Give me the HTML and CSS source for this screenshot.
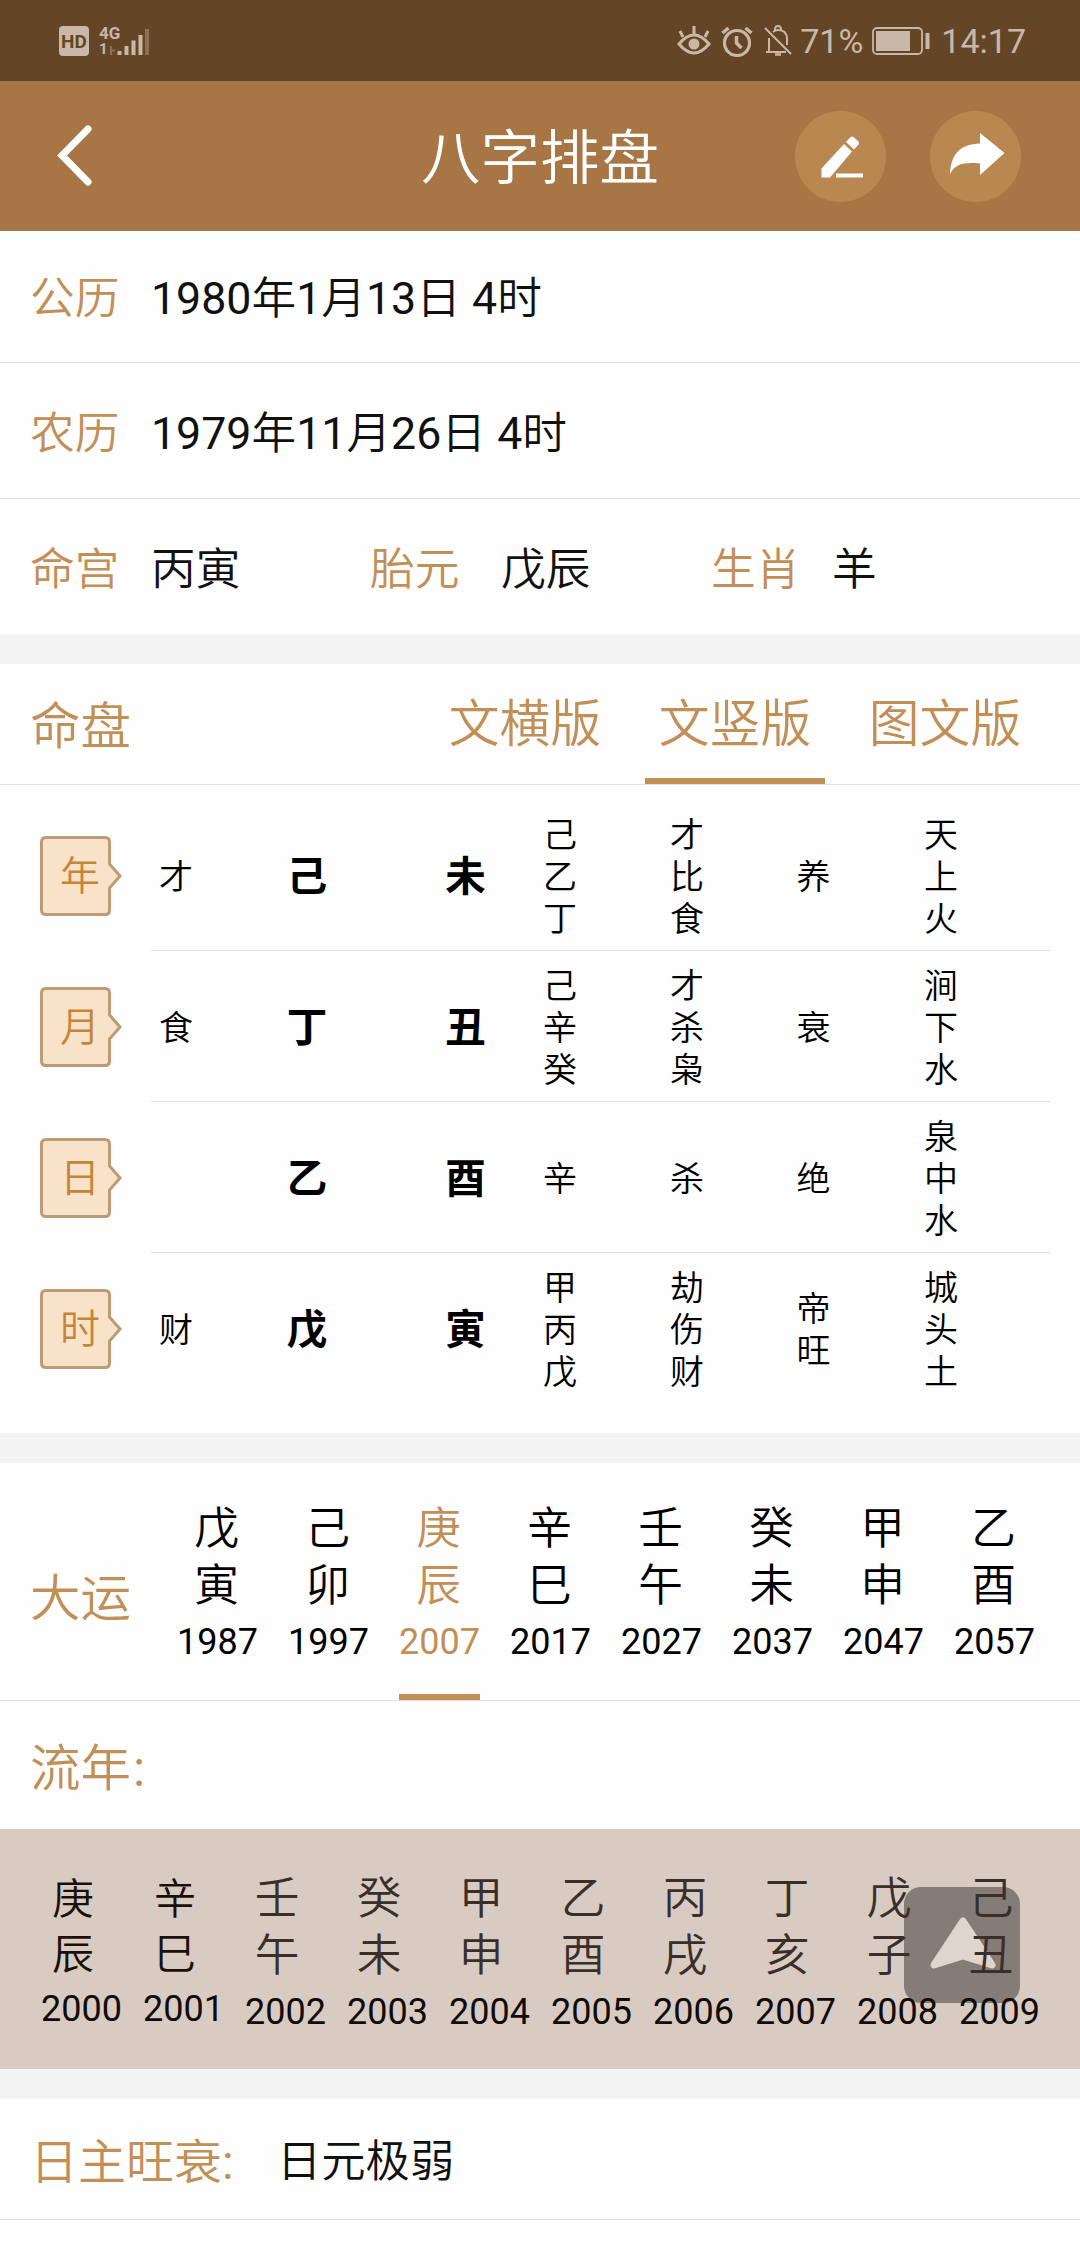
FILE: index.html
```
<!DOCTYPE html>
<html lang="zh-CN">
<head>
    <meta charset="UTF-8">
    <meta name="viewport" content="width=device-width, initial-scale=1.0">
    <title>八字排盘</title>
    <link rel="stylesheet" href="styles.css">
</head>
<body>

<!-- 状态栏 -->
<div class="status-bar">
    <div class="status-left">
        <span class="hd">HD</span>
        <div class="net"><span>4G</span><span class="sim">1</span></div>
        <svg class="signal" width="40" height="34" viewBox="0 0 40 34">
            <path d="M2 22v9M2 26.500h4" class="dim" stroke-width="2"/>
            <path d="M10.500 27v4M17.500 22v9M24.500 16.500v14.500M31.500 11v20" stroke-width="4"/>
            <path d="M38 5v26" class="dim" stroke-width="4"/>
        </svg>
    </div>
    <div class="status-right">
        <svg class="eye" width="34" height="32" viewBox="0 0 34 32">
            <path d="M2 19Q17 1 32 19Q17 37 2 19Z" stroke-width="3"/>
            <path d="M17 1v8M3 6l3 6M31 6l-3 6" stroke-width="3"/>
            <circle cx="17" cy="19" r="5.500" class="solid"/>
        </svg>
        <svg class="alarm" width="32" height="32" viewBox="0 0 32 32">
            <circle cx="16" cy="18" r="12.500" stroke-width="3.200"/>
            <path d="M15.500 11v7l5 5" stroke-width="3.500"/>
            <path d="M1.500 8l6-5M30.500 8l-6-5" stroke-width="3.500"/>
        </svg>
        <svg class="bell" width="28" height="32" viewBox="0 0 28 32">
            <path d="M2 27h20M5 27V13M9 7Q11 5 14 5Q23 5 23 14V20" stroke-width="2"/>
            <path d="M11 5Q11 1 14 1Q17 1 17 5M1 3l26 26" stroke-width="2"/>
            <path d="M11 29.500h6" stroke-width="2.500"/>
        </svg>
        <span class="percent">71%</span>
        <svg class="battery" width="60" height="28" viewBox="0 0 60 28">
            <rect x="1" y="1" width="49" height="26" rx="4" stroke-width="1.800"/>
            <rect x="4" y="4" width="34" height="20" class="solid"/>
            <rect x="53.500" y="6" width="4" height="16" class="solid"/>
        </svg>
        <span class="time">14:17</span>
    </div>
</div>

<!-- 标题栏 -->
<div class="header">
    <svg class="back" width="40" height="64" viewBox="0 0 40 64">
        <path d="M34 5L8 31.500L34 58"/>
    </svg>
    <h1>八字排盘</h1>
    <div class="actions">
        <div class="action">
            <svg width="91" height="91" viewBox="0 0 91 91">
                <path d="M26.500 57.500L49 33l8 7.500L35 66.500h-8.500z"/>
                <path d="M51 31l4.500-5q1.500-1 3 0l5 4.500q1 1.500 0 3L59 38.500z"/>
                <rect x="41" y="62.500" width="27" height="4"/>
            </svg>
        </div>
        <div class="action">
            <svg width="91" height="91" viewBox="0 0 91 91">
                <path d="M20 63C21 43 30 33 50 32.500V22L74.500 42L50 64V52.500C34 51 25 53 20 63Z"/>
            </svg>
        </div>
    </div>
</div>

<!-- 基本信息 -->
<div class="info-row info-first">
    <span class="label">公历</span><span>1980<b>年</b>1<b>月</b>13<b>日</b> 4<b>时</b></span>
</div>
<div class="info-row">
    <span class="label">农历</span><span>1979<b>年</b>11<b>月</b>26<b>日</b> 4<b>时</b></span>
</div>
<div class="info-row info-last">
    <div class="info-item"><span class="label">命宫</span><b>丙寅</b></div>
    <div class="info-item taiyuan"><span class="label">胎元</span><b>戊辰</b></div>
    <div class="info-item"><span class="label">生肖</span><b>羊</b></div>
</div>
<div class="divider"></div>

<!-- 命盘 -->
<div class="tabs">
    <div class="section-title">命盘</div>
    <div class="tab">文横版</div>
    <div class="tab active">文竖版</div>
    <div class="tab">图文版</div>
</div>
<div class="chart">
    <div class="chart-row">
        <div class="badge">
            <svg width="84" height="80" viewBox="0 0 84 80"><path d="M7 1.500H66Q70.500 1.500 70.500 6V28L81 40L70.500 52V74Q70.500 78.500 66 78.500H7Q2.500 78.500 2.500 74V6Q2.500 1.500 7 1.500Z"/></svg>
            <span>年</span>
        </div>
        <div class="cells">
            <div>才</div><div class="stem">己</div><div class="branch">未</div>
            <div>己<br>乙<br>丁</div><div>才<br>比<br>食</div><div>养</div><div>天<br>上<br>火</div>
        </div>
    </div>
    <div class="chart-row">
        <div class="badge">
            <svg width="84" height="80" viewBox="0 0 84 80"><path d="M7 1.500H66Q70.500 1.500 70.500 6V28L81 40L70.500 52V74Q70.500 78.500 66 78.500H7Q2.500 78.500 2.500 74V6Q2.500 1.500 7 1.500Z"/></svg>
            <span>月</span>
        </div>
        <div class="cells">
            <div>食</div><div class="stem">丁</div><div class="branch">丑</div>
            <div>己<br>辛<br>癸</div><div>才<br>杀<br>枭</div><div>衰</div><div>涧<br>下<br>水</div>
        </div>
    </div>
    <div class="chart-row">
        <div class="badge">
            <svg width="84" height="80" viewBox="0 0 84 80"><path d="M7 1.500H66Q70.500 1.500 70.500 6V28L81 40L70.500 52V74Q70.500 78.500 66 78.500H7Q2.500 78.500 2.500 74V6Q2.500 1.500 7 1.500Z"/></svg>
            <span>日</span>
        </div>
        <div class="cells">
            <div></div><div class="stem">乙</div><div class="branch">酉</div>
            <div>辛</div><div>杀</div><div>绝</div><div>泉<br>中<br>水</div>
        </div>
    </div>
    <div class="chart-row">
        <div class="badge">
            <svg width="84" height="80" viewBox="0 0 84 80"><path d="M7 1.500H66Q70.500 1.500 70.500 6V28L81 40L70.500 52V74Q70.500 78.500 66 78.500H7Q2.500 78.500 2.500 74V6Q2.500 1.500 7 1.500Z"/></svg>
            <span>时</span>
        </div>
        <div class="cells">
            <div>财</div><div class="stem">戊</div><div class="branch">寅</div>
            <div>甲<br>丙<br>戊</div><div>劫<br>伤<br>财</div><div>帝<br>旺</div><div>城<br>头<br>土</div>
        </div>
    </div>
</div>
<div class="divider"></div>

<!-- 大运 -->
<div class="dayun">
    <div class="section-title">大运</div>
    <div class="luck"><b>戊</b><b>寅</b><i>1987</i></div>
    <div class="luck"><b>己</b><b>卯</b><i>1997</i></div>
    <div class="luck current"><b>庚</b><b>辰</b><i>2007</i></div>
    <div class="luck"><b>辛</b><b>巳</b><i>2017</i></div>
    <div class="luck"><b>壬</b><b>午</b><i>2027</i></div>
    <div class="luck"><b>癸</b><b>未</b><i>2037</i></div>
    <div class="luck"><b>甲</b><b>申</b><i>2047</i></div>
    <div class="luck"><b>乙</b><b>酉</b><i>2057</i></div>
</div>

<!-- 流年 -->
<div class="liunian-title section-title">流年<i>:</i></div>
<div class="liunian">
    <!-- 回到顶部 -->
    <div class="to-top">
        <svg width="116" height="116" viewBox="0 0 116 116">
            <path d="M59 34L88 78L59 69L30 78Z"/>
        </svg>
    </div>
    <div class="year passed"><b>庚</b><b>辰</b><i>2000</i></div>
    <div class="year passed"><b>辛</b><b>巳</b><i>2001</i></div>
    <div class="year"><b>壬</b><b>午</b><i>2002</i></div>
    <div class="year"><b>癸</b><b>未</b><i>2003</i></div>
    <div class="year"><b>甲</b><b>申</b><i>2004</i></div>
    <div class="year"><b>乙</b><b>酉</b><i>2005</i></div>
    <div class="year"><b>丙</b><b>戌</b><i>2006</i></div>
    <div class="year"><b>丁</b><b>亥</b><i>2007</i></div>
    <div class="year"><b>戊</b><b>子</b><i>2008</i></div>
    <div class="year"><b>己</b><b>丑</b><i>2009</i></div>
</div>
<div class="divider"></div>

<!-- 日主旺衰 -->
<div class="strength">
    <span class="strength-label">日主旺衰<i>:</i></span><span>日元极弱</span>
</div>

</body>
</html>
```
FILE: styles.css
```
body {
    margin: 0;
    width: 1080px;
    height: 2244px;
    overflow: hidden;
    background-color: #fefefe;
    color: #111;
    font-family: Roboto, "Noto Sans CJK SC", sans-serif;
    font-size: 44.7px;
    box-sizing: border-box;
}
h1, b, i {
    margin: 0;
    font-weight: normal;
    font-style: normal;
}
/* 汉字用细一点的字重，数字保持正常 */
h1, b, .label, .section-title, .tab, .cells, .badge, .strength {
    font-weight: 350;
}

/* 状态栏 */
.status-bar {
    display: flex;
    justify-content: space-between;
    height: 81px;
    padding: 0 54px 0 59px;
    box-sizing: border-box;
    background-color: #644627;
    color: #c9b8a8;
    font-size: 34px;
    line-height: 82px;
}
.status-bar svg {
    fill: none;
    stroke: #c9b8a8;
}
.status-bar .solid {
    fill: #c9b8a8;
    stroke: none;
}
.status-bar .dim {
    stroke: #88705a;
}
.status-left, .status-right {
    display: flex;
    align-items: center;
}
.hd {
    width: 30px;
    height: 30px;
    border-radius: 4px;
    background-color: #c9b8a8;
    color: #644627;
    font-size: 19px;
    font-weight: 700;
    line-height: 31px;
    text-align: center;
}
.net {
    display: flex;
    flex-direction: column;
    width: 20px;
    margin-left: 10px;
    font-size: 17px;
    font-weight: 700;
    line-height: 18px;
}
.net .sim {
    font-size: 15px;
    line-height: 15px;
}
.signal {
    margin-left: -10px;
}
.alarm {
    margin-left: 10px;
}
.bell {
    margin-left: 11px;
}
.percent {
    margin-left: 8px;
}
.battery {
    margin-left: 9px;
}
.time {
    margin-left: 9px;
}

/* 标题栏 */
.header {
    display: grid;
    grid-template-columns: 1fr auto 1fr;
    align-items: center;
    height: 150px;
    padding: 0 59px 0 54px;
    box-sizing: border-box;
    background-color: #a87644;
}
.header h1 {
    padding-top: 5px;
    padding-left: 5px;
    color: #fff;
    font-size: 59.5px;
    line-height: 90px;
}
.back {
    fill: none;
    stroke: #fff;
    stroke-width: 7;
    stroke-linecap: round;
}
.actions {
    display: flex;
    justify-content: flex-end;
    gap: 44px;
}
.action {
    width: 91px;
    height: 91px;
    border-radius: 50%;
    background-color: #b98850;
}
.action svg {
    display: block;
    fill: #fff;
}

/* 基本信息 */
.info-row {
    display: flex;
    align-items: center;
    height: 136px;
    padding-left: 30px;
    padding-bottom: 3px;
    box-sizing: border-box;
    border-bottom: 1px solid #dcdfde;
}
.info-first {
    height: 132px;
    padding-bottom: 5px;
}
.info-last {
    height: 135px;
    border-bottom: none;
}
.label {
    width: 121px;
    color: #c28f57;
}
.info-item {
    display: flex;
    width: 340px;
}
.taiyuan {
    width: 341px;
}
.taiyuan .label {
    width: 131px;
}
.divider {
    height: 30px;
    background-color: #f4f4f4;
}

/* 命盘 */
.section-title {
    color: #c28f57;
    font-size: 50.5px;
}
.tabs {
    display: flex;
    align-items: center;
    gap: 30px;
    height: 121px;
    padding: 0 45px 0 30px;
    box-sizing: border-box;
    border-bottom: 1px solid #e2e2e2;
}
.tabs .section-title {
    flex: 1;
    padding-top: 5px;
    line-height: 116px;
}
.tab {
    width: 180px;
    height: 120px;
    box-sizing: border-box;
    color: #c28f57;
    font-size: 50.8px;
    line-height: 122px;
    text-align: center;
}
.tab.active {
    border-bottom: 6px solid #c28f57;
}
.chart {
    height: 648px;
    padding: 15px 30px 0 39px;
    box-sizing: border-box;
    color: #000;
    font-size: 34px;
    line-height: 42px;
}
.chart-row {
    display: flex;
    align-items: center;
    height: 151px;
}
.badge {
    position: relative;
    width: 84px;
    height: 80px;
    margin-right: 28px;
}
.badge svg {
    display: block;
    fill: #f8e3ca;
    stroke: #bd9b74;
    stroke-width: 3;
}
.badge span {
    position: absolute;
    left: 21px;
    top: 20px;
    color: #c58538;
    font-size: 40px;
}
.cells {
    flex: 1;
    display: grid;
    grid-template-columns: 50px 212px 105px 84px 170px 83px 172px;
    align-items: center;
    justify-items: center;
    height: 151px;
    padding-top: 4px;
    box-sizing: border-box;
    border-bottom: 1px solid #e2e2e2;
}
.chart-row:last-child .cells {
    border-bottom-color: transparent;
}
.stem, .branch {
    font-size: 40.5px;
    font-weight: 700;
}

/* 大运 */
.dayun {
    display: flex;
    gap: 30px;
    height: 238px;
    padding-left: 30px;
    box-sizing: border-box;
    border-bottom: 1px solid #dedede;
    color: #000;
}
.dayun .section-title {
    width: 117px;
    padding-top: 100px;
    line-height: 72px;
}
.luck, .year {
    display: flex;
    flex-direction: column;
    align-items: center;
    width: 81px;
    box-sizing: border-box;
    line-height: 57px;
}
.luck {
    padding-top: 38px;
}
.luck b {
    padding-right: 2px;
}
.luck i, .year i {
    font-size: 36px;
    line-height: 54px;
}
.luck.current {
    border-bottom: 6px solid #c28f57;
    color: #c28f57;
}

/* 流年 */
.liunian-title {
    height: 128px;
    padding-left: 30px;
    line-height: 136px;
}
.liunian-title i {
    padding-left: 2px;
}
.liunian {
    position: relative;
    display: flex;
    gap: 21px;
    height: 240px;
    padding: 42px 0 0 41px;
    box-sizing: border-box;
    background-color: #d8cbc2;
}
.year {
    position: relative;
    color: #110a06;
}
.year b {
    padding-right: 17px;
    color: #3a2e29;
}
.year.passed {
    line-height: 55px;
    padding-top: 1px;
}
.year.passed b {
    color: #1b1009;
    font-size: 42px;
}
.to-top {
    position: absolute;
    left: 904px;
    top: 58px;
    width: 116px;
    height: 116px;
    border-radius: 17px;
    background-color: #857b77;
}
.to-top svg {
    fill: #dfd5ce;
    stroke: #dfd5ce;
    stroke-width: 7;
    stroke-linejoin: round;
}

/* 日主旺衰 */
.strength {
    display: flex;
    align-items: center;
    height: 121px;
    padding-left: 30px;
    padding-bottom: 2px;
    box-sizing: border-box;
    border-bottom: 1px solid #dedede;
    font-size: 44.3px;
}
.strength-label {
    width: 247px;
    color: #c28f57;
    font-size: 48px;
}
```
